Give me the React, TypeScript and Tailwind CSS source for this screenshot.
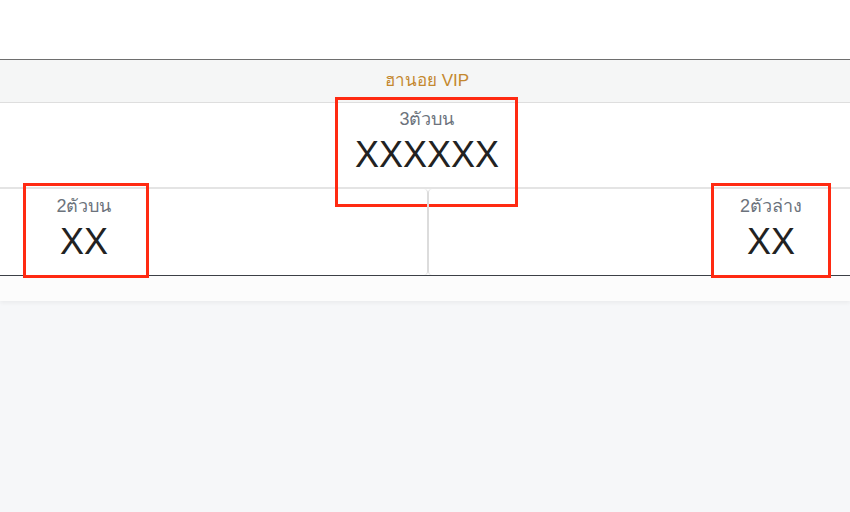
const font = { fontFamily: '"Liberation Sans", "Noto Sans", "DejaVu Sans", sans-serif' };

function Mark({ className }: { className: string }) {
  return <div className={`pointer-events-none absolute border-[3px] border-[#ff2a12] ${className}`} />;
}

function Cell({ label, value }: { label: string; value: string }) {
  return (
    <div className="flex w-[80px] flex-col items-center">
      <span className="text-[18px] leading-[22px] text-[#6c737c]">{label}</span>
      <span className="mt-[6px] text-[36px] leading-[38px] text-[#222222]">{value}</span>
    </div>
  );
}

export default function App() {
  return (
    <div className="min-h-[512px] bg-[#f6f7f9]" style={font}>
      <div className="bg-white shadow-[0_2px_4px_rgba(0,0,0,0.05)]">
        <div className="h-[59px] bg-white" />
        <div className="border-t border-b border-t-[#6e6e6e] border-b-[#3c4046]">
          <div className="flex h-[43px] items-center justify-center border-b border-[#dedede] bg-[#f5f6f6] pl-[4px]">
            <span className="text-[17px] text-[#c4882f]">ฮานอย VIP</span>
          </div>
          <div className="relative flex h-[86px] justify-center border-b-2 border-[#e4e4e4] pt-[5px] pl-[4px]">
            <div className="flex flex-col items-center">
              <span className="text-[18px] leading-[22px] text-[#6c737c]">3ตัวบน</span>
              <span className="mt-[6px] text-[36px] leading-[38px] text-[#222222]">XXXXXX</span>
            </div>
            <Mark className="left-[335px] top-[-6px] h-[110px] w-[183px]" />
          </div>
          <div className="relative flex h-[86px]">
            <div className="-ml-[4px] flex flex-1 rounded-[4px] border border-t-0 border-b-0 border-[#dcdcdc] pt-[6px] pl-[47px]">
              <Cell label="2ตัวบน" value="XX" />
            </div>
            <div className="-mr-[4px] flex flex-1 justify-end rounded-[4px] border border-t-0 border-b-0 border-[#dcdcdc] pt-[6px] pr-[42px]">
              <Cell label="2ตัวล่าง" value="XX" />
            </div>
            <Mark className="left-[23px] top-[-6px] h-[95px] w-[126px]" />
            <Mark className="left-[711px] top-[-6px] h-[95px] w-[120px]" />
          </div>
        </div>
        <div className="h-[25px] bg-[#fcfcfc]" />
      </div>
    </div>
  );
}
